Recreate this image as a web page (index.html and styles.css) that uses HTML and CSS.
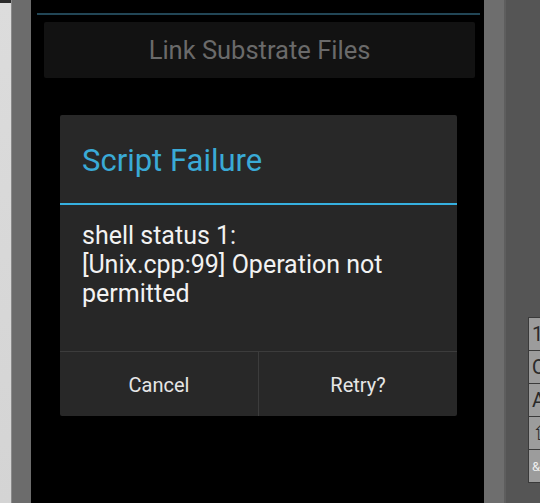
FILE: index.html
```html
<!DOCTYPE html>
<html lang="en">
<head>
    <meta charset="UTF-8">
    <title>Script Failure</title>
    <link rel="stylesheet" href="styles.css">
</head>
<body>
    <div class="device">
        <div class="edge-left"></div>
        <div class="frame-left"></div>
        <div class="screen">
            <div class="top-line"></div>
            <div class="link-button">Link Substrate Files</div>
            <div class="dialog">
                <div class="dialog-title">Script Failure</div>
                <div class="dialog-body">shell status 1:<br>[Unix.cpp:99] Operation not<br>permitted</div>
                <div class="dialog-buttons">
                    <div class="dialog-button">Cancel</div>
                    <div class="dialog-button">Retry?</div>
                </div>
            </div>
        </div>
        <div class="frame-right"></div>
        <div class="side">
            <div class="keys">
                <div class="key">1</div>
                <div class="key">Q</div>
                <div class="key">A</div>
                <div class="key">&#8679;</div>
                <div class="key small">&amp;</div>
            </div>
        </div>
    </div>
</body>
</html>
```
FILE: styles.css
```css
body {
    margin: 0;
    background-color: #000;
    font-family: Roboto, 'Noto Sans', sans-serif;
    overflow: hidden;
}
.device {
    display: flex;
    width: 540px;
    height: 503px;
}
.edge-left {
    flex-shrink: 0;
    width: 12px;
    background: linear-gradient(to bottom, #2a2a2a 0, #2a2a2a 3px, #dcdcdc 3px, #d4d4d4 100%);
    border-right: 1px solid #8a8a8a;
    box-sizing: border-box;
}
.frame-left {
    flex-shrink: 0;
    width: 19px;
    background-color: #6c6c6c;
}
.screen {
    flex-shrink: 0;
    width: 453px;
    background-color: #000;
    display: flex;
    flex-direction: column;
    box-sizing: border-box;
    padding: 13px 9px 0 6px;
}
.top-line {
    height: 2px;
    background-color: #224656;
    margin-right: -5px;
}
.link-button {
    margin: 7px 0 0 7px;
    height: 56px;
    background-color: #121212;
    border-radius: 2px;
    color: #6a6a6a;
    font-size: 25.5px;
    display: flex;
    align-items: center;
    justify-content: center;
}
.dialog {
    margin: 37px 18px 0 23px;
    background-color: #282828;
    border-radius: 2px;
    display: flex;
    flex-direction: column;
}
.dialog-title {
    height: 88px;
    box-sizing: border-box;
    padding: 27px 0 0 22px;
    color: #3aaad6;
    font-size: 31px;
}
.dialog-body {
    border-top: 2px solid #36b0e0;
    height: 148px;
    box-sizing: border-box;
    padding: 16px 22px 0 22px;
    color: #f2f2f2;
    font-size: 25px;
    line-height: 29px;
    background-color: #272727;
}
.dialog-buttons {
    display: flex;
    border-top: 1px solid #3c3c3c;
    height: 65px;
    box-sizing: border-box;
}
.dialog-button {
    flex: 1;
    display: flex;
    align-items: center;
    justify-content: center;
    color: #e6e6e6;
    font-size: 20px;
    padding-top: 2px;
}
.dialog-button + .dialog-button {
    border-left: 1px solid #3c3c3c;
}
.frame-right {
    flex-shrink: 0;
    width: 22px;
    box-sizing: border-box;
    background-color: #6e6e6e;
    border-right: 2px solid #5e5e5e;
}
.side {
    flex: 1;
    min-width: 0;
    overflow: hidden;
    background-color: #555;
    padding-top: 317px;
    padding-left: 22px;
}
.keys {
    display: flex;
    flex-direction: column;
    border: 1px solid #3a3a3a;
    border-right: none;
    background-color: #3a3a3a;
    gap: 1px;
}
.key {
    height: 32px;
    background-color: #9c9c9c;
    color: #2a2a2a;
    font-size: 20px;
    padding-left: 3px;
    display: flex;
    align-items: center;
    overflow: hidden;
}
.key.small {
    font-size: 13px;
    color: #eee;
}
```
